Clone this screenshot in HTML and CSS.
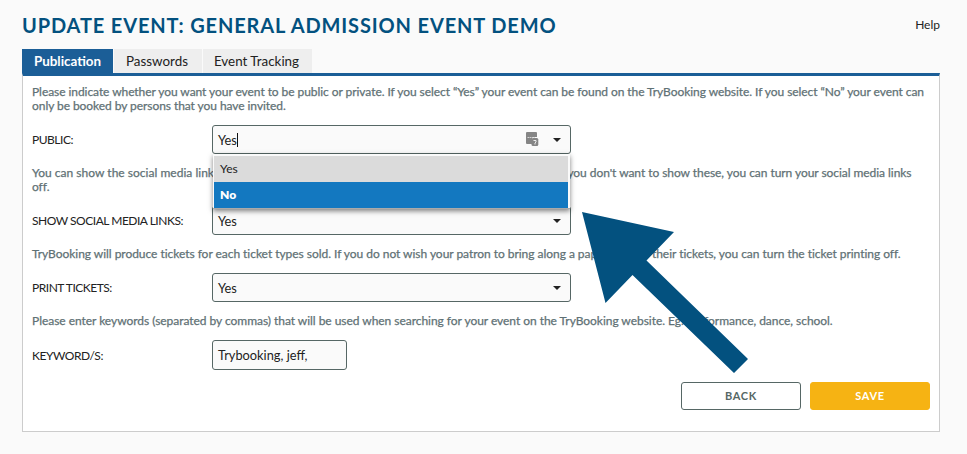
FILE: index.html
```html
<!DOCTYPE html>
<html lang="en">
<head>
  <meta charset="utf-8">
  <title>Update Event</title>
  <link rel="stylesheet" href="styles.css">
</head>
<body>
  <div class="header">
    <h1>Update Event: General Admission Event Demo</h1>
    <a class="help">Help</a>
  </div>

  <div class="tabs">
    <div class="tab active">Publication</div>
    <div class="tab passwords">Passwords</div>
    <div class="tab tracking">Event Tracking</div>
  </div>

  <div class="panel">
    <p class="hint">Please indicate whether you want your event to be public or private. If you select “Yes” your event can be found on the TryBooking website. If you select “No” your event can<br>only be booked by persons that you have invited.</p>
    <div class="row">
      <label>PUBLIC:</label>
      <div class="select">
        <span class="value">Yes</span><span class="caret"></span>
        <svg class="key" width="13" height="15" viewBox="0 0 13 15">
          <path d="M1 0h9q1 0 1 1v4H6v7H1q-1 0-1-1V1q0-1 1-1z" fill="#858585"/>
          <path d="M1.500 5.500h8" stroke="#d5d5d5" stroke-dasharray="1.500 .5"/>
          <rect x="5.500" y="6" width="6.800" height="8" rx="1.500" fill="#858585"/>
          <path d="M7.500 8.500h2.500v1.500l-1 1v1.500" stroke="#eee" fill="none"/>
        </svg>
        <span class="arrow"></span>
        <div class="menu">
          <div class="option">Yes</div>
          <div class="option selected">No</div>
        </div>
      </div>
    </div>

    <p class="hint social"><span class="lead">You can show the social media links</span> on the event booking homepage to help you promote the event. If you don't want to show these, you can turn your social media links<br>off.</p>
    <div class="row">
      <label>SHOW SOCIAL MEDIA LINKS:</label>
      <div class="select"><span class="value">Yes</span><span class="arrow"></span></div>
    </div>

    <p class="hint tickets">TryBooking will produce tickets for each ticket types sold. If you do not wish your patron to bring along a paper copy of their tickets, you can turn the ticket printing off.</p>
    <div class="row">
      <label>PRINT TICKETS:</label>
      <div class="select"><span class="value">Yes</span><span class="arrow"></span></div>
    </div>

    <p class="hint keywords">Please enter keywords (separated by commas) that will be used when searching for your event on the TryBooking website. Eg. performance, dance, school.</p>
    <div class="row last">
      <label>KEYWORD/S:</label>
      <div class="select text"><span class="value">Trybooking, jeff,</span></div>
    </div>

    <div class="buttons">
      <button class="back">BACK</button>
      <button class="save">SAVE</button>
    </div>
  </div>

  <svg class="pointer" width="167" height="164" viewBox="0 0 167 164">
    <path d="M0 0L92 20L64.500 48.500L166 147L152 161L50.500 63L23.500 91z" fill="#03517f"/>
  </svg>
</body>
</html>
```

FILE: styles.css
```css
* {
  box-sizing: border-box;
}
body {
  margin: 0;
  padding: 0 27px 0 22px;
  height: 454px;
  background: #fafafa;
  font-family: Lato, "Open Sans", sans-serif;
  font-size: 12px;
  color: #222;
  position: relative;
  overflow: hidden;
}
.header {
  display: flex;
  justify-content: space-between;
  height: 49px;
}
h1 {
  margin: 13px 0 0;
  font-size: 20px;
  line-height: 24px;
  letter-spacing: 0.86px;
  text-transform: uppercase;
  color: #03517f;
  white-space: nowrap;
}
.help {
  margin-top: 17px;
  line-height: 16px;
}
.tabs {
  display: flex;
  gap: 1px;
  height: 24px;
}
.tab {
  width: 88px;
  padding-right: 2px;
  background: #eee;
  font-size: 13.4px;
  line-height: 25px;
  text-align: center;
  white-space: nowrap;
}
.tab.active {
  width: 91px;
  padding-right: 0;
  background: #1b5e97;
  color: #fff;
  font-weight: bold;
}
.tab.tracking {
  width: 109px;
}
.panel {
  height: 359px;
  padding: 9px 9px 0;
  background: #fff;
  border: 1px solid #ccc;
  border-top: 3px solid #1b5e97;
}
.hint {
  margin: 0;
  height: 28px;
  line-height: 14px;
  letter-spacing: -0.062px;
  color: #5f7175;
  -webkit-text-stroke: 0.25px #5f7175;
  white-space: nowrap;
}
.social {
  letter-spacing: -0.052px;
}
.lead {
  letter-spacing: 0.02px;
}
.row {
  display: flex;
  align-items: center;
  height: 29px;
  margin: 12px 0;
}
.row.last {
  height: 30px;
}
label {
  width: 180px;
  letter-spacing: -0.48px;
  white-space: nowrap;
}
.select {
  position: relative;
  display: flex;
  align-items: center;
  width: 359px;
  height: 29px;
  padding: 0 9px 0 5px;
  background: #fafafa;
  border: 1px solid #566765;
  border-radius: 3px;
  font-size: 12.8px;
}
.select.text {
  width: 135px;
  height: 30px;
}
.caret {
  width: 1px;
  height: 14px;
  background: #111;
}
.arrow {
  margin-left: auto;
  border: 4px solid transparent;
  border-top-color: #222;
  border-bottom: 0;
}
.key {
  margin-left: auto;
}
.key + .arrow {
  margin-left: 14px;
}
.menu {
  position: absolute;
  z-index: 1;
  left: 0;
  top: 28px;
  width: 357px;
  padding: 2px 2px 0 1px;
  background: #fafafa;
  border-bottom: 1px solid #aaa;
  box-shadow: 0 2px 5px rgba(0, 0, 0, 0.5);
}
.option {
  height: 26px;
  padding-left: 6px;
  font-size: 12px;
  line-height: 26px;
  background: #dbdbdb;
}
.option.selected {
  background: #1378c0;
  color: #fff;
  font-weight: 800;
}
.tickets, .keywords {
  height: 14px;
  letter-spacing: -0.038px;
}
.buttons {
  display: flex;
  justify-content: flex-end;
  gap: 9px;
}
button {
  width: 120px;
  height: 28px;
  padding: 0 0 2px;
  border: 1px solid #566765;
  border-radius: 3px;
  background: #fff;
  font: bold 11px Lato, sans-serif;
  letter-spacing: 0.7px;
  color: #566765;
}
.save {
  background: #f6b313;
  border-color: #f6b313;
  color: #fff;
}
.pointer {
  position: absolute;
  left: 582px;
  top: 212px;
}
```
